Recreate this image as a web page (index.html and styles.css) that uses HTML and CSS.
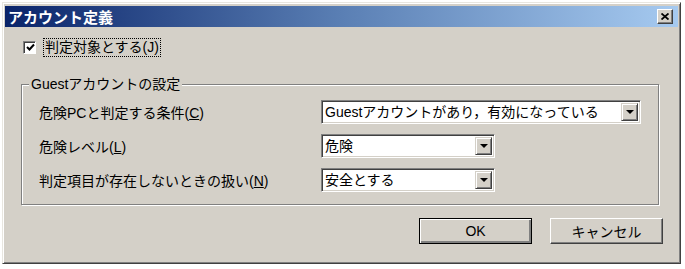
FILE: index.html
```html
<!DOCTYPE html>
<html lang="ja">
    <head>
        <meta charset="UTF-8">
        <link rel="stylesheet" href="styles.css">
    </head>

    <body>
        <div class="window">
            <div class="titlebar">
                <span class="title">アカウント定義</span>
                <span class="close">
                    <svg width="8" height="7" viewBox="0 0 8 7"><path d="M0.5 0.5 L7.5 6.5 M7.5 0.5 L0.5 6.5" stroke="#000" stroke-width="1.8" fill="none"/></svg>
                </span>
            </div>

            <div class="content">
                <div class="check_row">
                    <span class="checkbox">
                        <svg width="9" height="9" viewBox="0 0 9 9"><path d="M1 4 L3.5 6.5 L8 1.5" stroke="#000" stroke-width="2" fill="none"/></svg>
                    </span>
                    <span class="focus">判定対象とする(J)</span>
                </div>

                <fieldset class="group">
                    <legend>Guestアカウントの設定</legend>
                    <div class="rows">
                        <span class="label">危険PCと判定する条件(<u>C</u>)</span>
                        <div class="combo wide">
                            <span class="value">Guestアカウントがあり，有効になっている</span>
                            <span class="drop"><i></i></span>
                        </div>

                        <span class="label">危険レベル(<u>L</u>)</span>
                        <div class="combo">
                            <span class="value">危険</span>
                            <span class="drop"><i></i></span>
                        </div>

                        <span class="label">判定項目が存在しないときの扱い(<u>N</u>)</span>
                        <div class="combo">
                            <span class="value">安全とする</span>
                            <span class="drop"><i></i></span>
                        </div>
                    </div>
                </fieldset>

                <div class="actions">
                    <button class="btn default">OK</button>
                    <button class="btn">キャンセル</button>
                </div>
            </div>
        </div>
    </body>
</html>
```

FILE: styles.css
```css
@charset "UTF-8";
body{
    margin: 0;
    background: #fff;
    font-family: "Liberation Sans", "Noto Sans CJK JP", sans-serif;
    font-size: 14px;
    color: #000;
}
.window{
    margin: 2px 0 0 2px;
    width: 679px;
    height: 262px;
    box-sizing: border-box;
    background: #d4d0c8;
    border: 1px solid;
    border-color: #e8e6e0 #404040 #404040 #e8e6e0;
    box-shadow: inset 1px 1px #fff, inset -1px -1px #808080;
    padding: 3px 2px 2px 2px;
}
.titlebar{
    height: 21px;
    display: flex;
    align-items: center;
    justify-content: space-between;
    background: linear-gradient(to right, #0a246a, #5a7fb4 50%, #a6caf0);
    padding: 0 5px 0 3px;
}
.title{
    color: #fff;
    font-weight: bold;
    font-size: 15px;
}
.close{
    width: 16px;
    height: 15px;
    box-sizing: border-box;
    background: #d4d0c8;
    border: 1px solid;
    border-color: #fff #404040 #404040 #fff;
    box-shadow: inset -1px -1px #808080;
    display: flex;
    align-items: center;
    justify-content: center;
}
.content{
    padding: 0 15px 0 17px;
}
.check_row{
    display: flex;
    align-items: center;
    height: 20px;
    margin-top: 10px;
    margin-left: 1px;
    gap: 8px;
}
.checkbox{
    width: 13px;
    height: 13px;
    box-sizing: border-box;
    background: #fff;
    border: 1px solid;
    border-color: #808080 #fff #fff #808080;
    box-shadow: inset 1px 1px #404040;
    display: flex;
    align-items: center;
    justify-content: center;
    padding: 1px 0 0 1px;
}
.focus{
    outline: 1px dotted #000;
    padding: 0 1px;
    line-height: 17px;
}
.group{
    margin: 17px 0 0 -1px;
    width: 637px;
    box-sizing: border-box;
    border: 1px solid #808080;
    box-shadow: inset 1px 1px #fff, 1px 1px #fff;
    padding: 6px 17px 12px 17px;
}
.group legend{
    margin-left: -10px;
    padding: 0 2px;
    line-height: 20px;
    background: #d4d0c8;
}
.rows{
    display: grid;
    grid-template-columns: 282px auto;
    row-gap: 10px;
    align-items: center;
}
.combo{
    width: 174px;
    height: 24px;
    box-sizing: border-box;
    background: #fff;
    border: 1px solid;
    border-color: #808080 #fff #fff #808080;
    box-shadow: inset 1px 1px #404040, inset -1px -1px #d4d0c8;
    display: flex;
    align-items: center;
    justify-content: space-between;
    padding: 2px 2px 2px 3px;
}
.combo.wide{
    width: 320px;
}
.value{
    white-space: nowrap;
    line-height: 18px;
}
.drop{
    width: 17px;
    height: 18px;
    box-sizing: border-box;
    background: #d4d0c8;
    border: 1px solid;
    border-color: #d4d0c8 #404040 #404040 #d4d0c8;
    box-shadow: inset 1px 1px #fff, inset -1px -1px #808080;
    display: flex;
    align-items: center;
    justify-content: center;
}
.drop i{
    width: 0;
    height: 0;
    border-left: 4px solid transparent;
    border-right: 4px solid transparent;
    border-top: 4px solid #000;
}
.actions{
    display: flex;
    justify-content: flex-end;
    gap: 18px;
    margin-top: 13px;
}
.btn{
    width: 113px;
    height: 26px;
    background: #d4d0c8;
    font-family: "Liberation Sans", "Noto Sans CJK JP", sans-serif;
    font-size: 14px;
    border: 1px solid;
    border-color: #fff #404040 #404040 #fff;
    box-shadow: inset -1px -1px #808080;
    padding: 0;
}
.btn.default{
    border: 1px solid #000;
    box-shadow: inset 1px 1px #fff, inset -2px -2px #808080;
}
```
